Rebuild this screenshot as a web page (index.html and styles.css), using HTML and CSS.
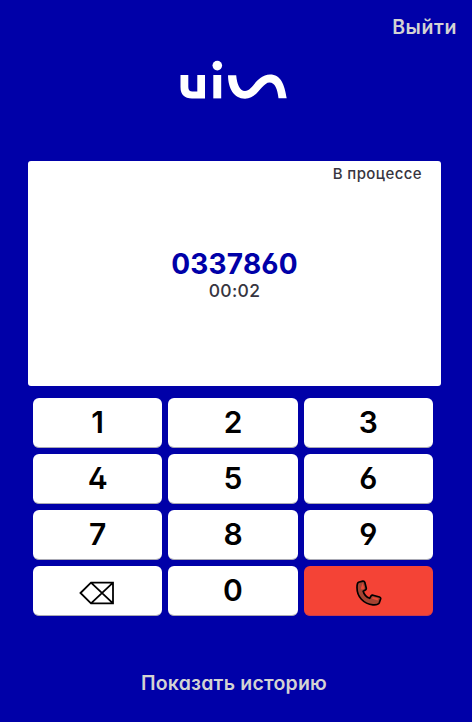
FILE: index.html
```
<!DOCTYPE html>
<html lang="ru">
<head>
<meta charset="utf-8">
<title>UIS</title>
<link rel="stylesheet" href="styles.css">
</head>
<body>
<main class="phone">
  <header class="top"><a class="logout">Выйти</a></header>
  <svg class="logo" viewBox="0 0 108 40" width="108" height="40" role="img" aria-label="UIS">
    <path d="M.5 15H8.300V27Q8.300 31.600 12.500 31.600H17.300V15H25V38.400H12Q.5 38.400 .5 27Z"/>
    <path d="M33.300 15H41.200V38.400H33.300Z"/>
    <circle cx="37.300" cy="5.600" r="4.800"/>
    <path d="M48 15.300H56.200C57 24 59.500 31 65 31C72.500 31 77 14.600 90 14.600C101 14.600 104.500 25 106.700 38.200H98.500C97.500 29 95 22.400 89.500 22.400C82 22.400 77.500 38.700 65 38.700C53.500 38.700 48.200 28 48 15.300Z"/>
  </svg>
  <section class="display">
    <div class="status">В процессе</div>
    <div class="number">0337860</div>
    <div class="timer">00:02</div>
  </section>
  <section class="keypad">
    <button class="key">1</button>
    <button class="key">2</button>
    <button class="key">3</button>
    <button class="key">4</button>
    <button class="key">5</button>
    <button class="key">6</button>
    <button class="key">7</button>
    <button class="key">8</button>
    <button class="key">9</button>
    <button class="key" aria-label="Стереть">
      <svg class="erase" viewBox="0 0 36 24" width="36" height="24"><path d="M1.500 12L12 1.700H34V22.300H12ZM12 1.700L34 22.300M34 1.700L12 22.300"/></svg>
    </button>
    <button class="key">0</button>
    <button class="key key-hangup" aria-label="Завершить">
      <svg class="handset" viewBox="0 0 26 26" width="26" height="26">
        <path class="handset-body" d="M2.500 2.300L6.800 1.100Q8.300 .9 8.800 2.200L10.300 8.200Q10.400 9.500 9 10.200L7.200 11.200C8 14.200 10.500 17.200 13.700 18.300L15 15.900Q15.700 14.900 17 15.200L23.500 17Q25 17.600 24.600 19L23.300 22.800C22.300 24.600 20 25 17 24.800C7.500 24.200 .9 16.500 1 7.500C1 4.700 1.300 3 2.500 2.300Z"/>
        <path class="handset-light" d="M6.700 3L8.300 8.500L5.900 9.700L4.800 8.200ZM15.800 18.500L17 16.900L22.700 18.600L21.500 20.500Z"/>
      </svg>
    </button>
  </section>
  <footer class="bottom"><a class="history">Показать историю</a></footer>
</main>
</body>
</html>
```
FILE: styles.css
```
* { box-sizing: border-box; }
body {
  margin: 0;
  background: #0000a8;
  font-family: Inter, "Open Sans", sans-serif;
  font-feature-settings: "cv03", "cv04", "cv11", "cv02";
}
.phone {
  width: 472px;
  height: 722px;
  display: flex;
  flex-direction: column;
}
.top {
  display: flex;
  justify-content: flex-end;
  height: 60px;
  padding: 15px 15px 0 0;
}
.logout, .history {
  color: #d3d3d3;
  font-size: 19.5px;
  line-height: 24px;
  font-weight: 600;
}
.logout { letter-spacing: .6px; }
.history { letter-spacing: .22px; }
.logo {
  margin-left: 180px;
  fill: #fff;
}
.display {
  width: 413px;
  height: 225px;
  margin: 61px 0 0 28px;
  background: #fff;
  border-radius: 3px;
  text-align: center;
}
.status {
  height: 85px;
  padding: 3px 19px 0 0;
  text-align: right;
  color: #373540;
  font-size: 15px;
  line-height: 20px;
  font-weight: 500;
  letter-spacing: .4px;
}
.number {
  color: #0000a8;
  font-size: 28px;
  line-height: 36px;
  font-weight: 700;
  letter-spacing: .2px;
}
.timer {
  color: #373540;
  font-size: 17.5px;
  line-height: 18px;
  font-weight: 500;
  letter-spacing: .3px;
}
.keypad {
  display: grid;
  grid-template-columns: repeat(3, 1fr);
  grid-auto-rows: 50px;
  gap: 6px;
  width: 400px;
  margin: 12px 0 0 33px;
}
.key {
  display: flex;
  align-items: center;
  justify-content: center;
  padding: 0;
  border: 0;
  border-bottom: 1px solid #aaaab4;
  border-radius: 6px;
  background: #fff;
  color: #000;
  font: inherit;
  font-size: 30px;
  line-height: 34px;
  padding-bottom: 1px;
  font-weight: 600;
}
.key-hangup {
  background: #f44336;
  border-bottom-color: #c83b50;
}
.erase {
  margin: 6px 2px 0 0;
  fill: none;
  stroke: #000;
  stroke-width: 1.8;
}
.handset {
  margin: 5px 0 0 1px;
}
.handset-body {
  fill: #a34332;
  stroke: #000;
  stroke-width: 1.7;
  stroke-linejoin: round;
}
.handset-light { fill: #ea4938; }
.bottom {
  margin-top: 55px;
  text-align: center;
  padding-right: 4px;
}
```
